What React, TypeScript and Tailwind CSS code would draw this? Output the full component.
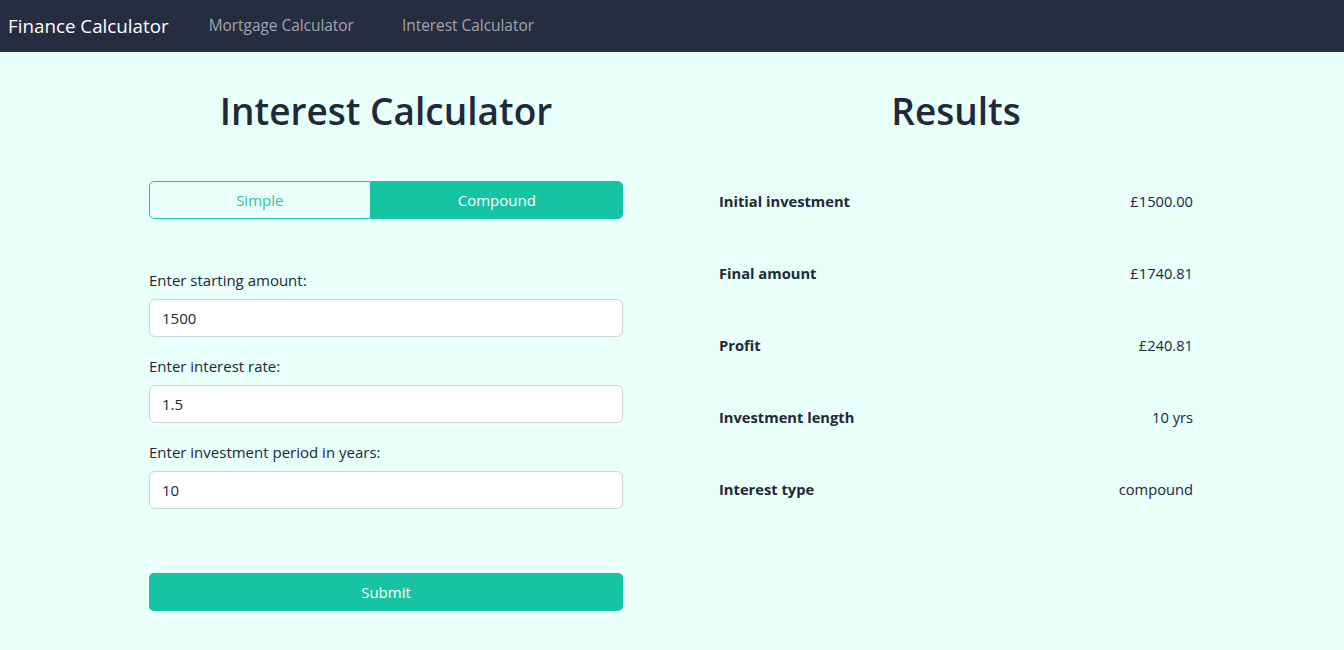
import { useState } from 'react';

const font = { fontFamily: '"Open Sans", "Noto Sans", sans-serif' };

export default function App() {
  const [type, setType] = useState<'simple' | 'compound'>('compound');
  const [amount, setAmount] = useState('1500');
  const [rate, setRate] = useState('1.5');
  const [years, setYears] = useState('10');

  const results = [
    { label: 'Initial investment', value: '£1500.00' },
    { label: 'Final amount', value: '£1740.81' },
    { label: 'Profit', value: '£240.81' },
    { label: 'Investment length', value: '10 yrs' },
    { label: 'Interest type', value: type },
  ];

  return (
    <div className="min-h-[650px] bg-[#e8fffa] text-[#212838]" style={font}>
      <nav className="h-[52px] bg-[#252d41] flex items-center px-2">
        <span className="text-white text-[18.8px] mr-10">Finance Calculator</span>
        <a className="text-[15.4px] text-[#a1a6b0] mr-12">Mortgage Calculator</a>
        <a className="text-[15.4px] text-[#a1a6b0]">Interest Calculator</a>
      </nav>

      <div className="w-[1140px] ml-[101px] flex">
        <div className="w-1/2 px-12">
          <h1 className="text-[37px] leading-[48px] font-semibold text-center mt-[35px]">Interest Calculator</h1>

          <div className="flex mt-[46px] h-[38px] rounded-[5px] overflow-hidden">
            <button
              onClick={() => setType('simple')}
              className={`flex-auto px-3 text-[15px] rounded-l-[5px] border ${
                type === 'simple' ? 'bg-[#16c4a3] border-[#16c4a3] text-white' : 'border-[#16c4a3] text-[#3cbf9f]'
              }`}
            >
              Simple
            </button>
            <button
              onClick={() => setType('compound')}
              className={`flex-auto px-3 text-[15px] rounded-r-[5px] border ${
                type === 'compound' ? 'bg-[#16c4a3] border-[#16c4a3] text-white' : 'border-[#16c4a3] text-[#3cbf9f]'
              }`}
            >
              Compound
            </button>
          </div>

          <div className="mt-[49px]">
            <label className="block text-[15px] leading-6 mb-[7px]">Enter starting amount:</label>
            <input
              value={amount}
              onChange={(e) => setAmount(e.target.value)}
              className="w-full h-[38px] bg-white border border-[#ced4da] rounded-[6px] px-3 text-[15px] outline-none"
            />
            <label className="block text-[15px] leading-6 mb-[7px] mt-[17px]">Enter interest rate:</label>
            <input
              value={rate}
              onChange={(e) => setRate(e.target.value)}
              className="w-full h-[38px] bg-white border border-[#ced4da] rounded-[6px] px-3 text-[15px] outline-none"
            />
            <label className="block text-[15px] leading-6 mb-[7px] mt-[17px]">Enter investment period in years:</label>
            <input
              value={years}
              onChange={(e) => setYears(e.target.value)}
              className="w-full h-[38px] bg-white border border-[#ced4da] rounded-[6px] px-3 text-[15px] outline-none"
            />
          </div>

          <button className="w-full h-[38px] mt-[64px] bg-[#16c4a3] text-white text-[15px] rounded-[5px]">Submit</button>
        </div>

        <div className="w-1/2 px-12">
          <h1 className="text-[37px] leading-[48px] font-semibold text-center mt-[35px]">Results</h1>
          <div className="mt-[54px] flex flex-col gap-12">
            {results.map((r) => (
              <div key={r.label} className="flex justify-between text-[14.7px] leading-6">
                <span className="font-bold">{r.label}</span>
                <span>{r.value}</span>
              </div>
            ))}
          </div>
        </div>
      </div>
    </div>
  );
}
